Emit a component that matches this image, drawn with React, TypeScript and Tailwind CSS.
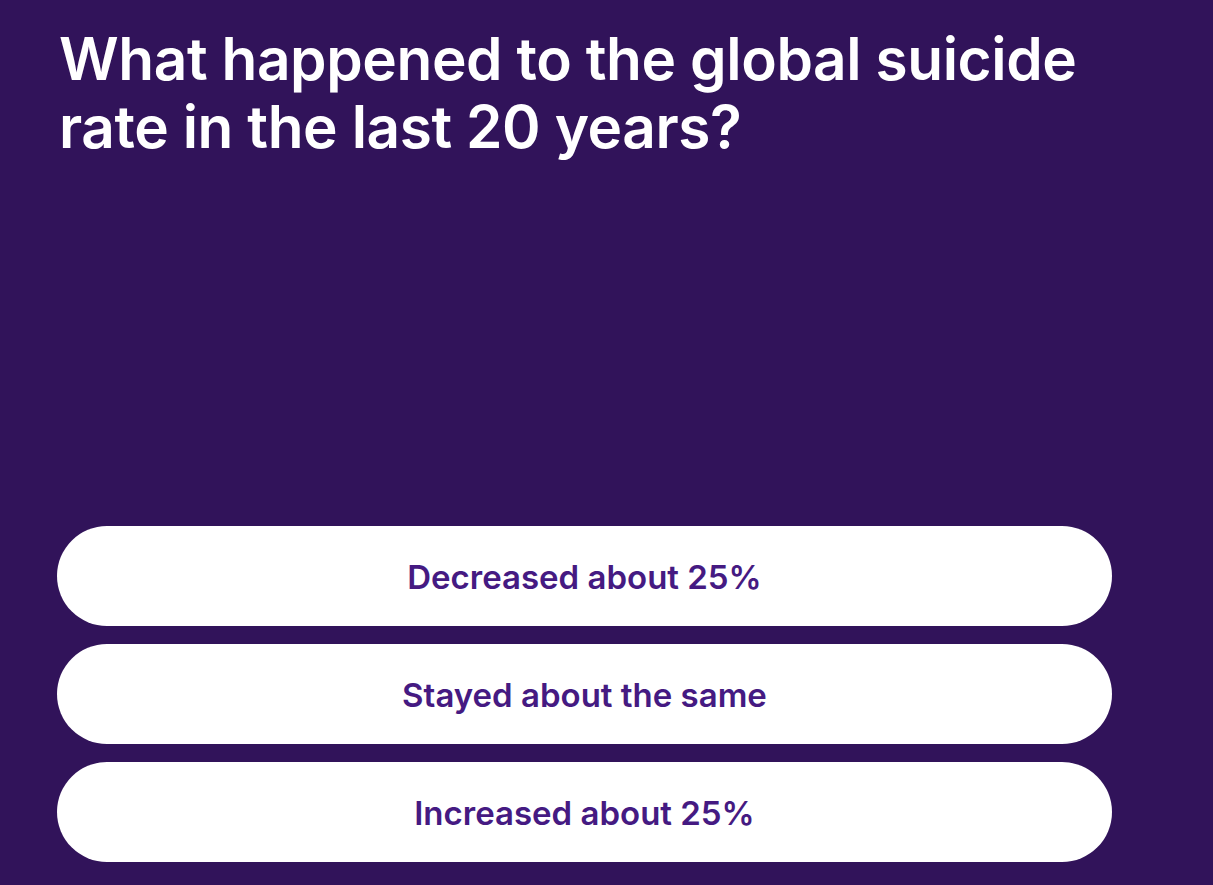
export default function App() {
  const answers = ["Decreased about 25%", "Stayed about the same", "Increased about 25%"];

  return (
    <div className="w-full h-[885px] bg-[#31135a] overflow-hidden flex flex-col px-[57px] pt-[25px] pb-[23px] font-['Inter',sans-serif]">
      <h1 className="w-[1080px] pl-[2px] text-white font-semibold text-[58.5px] leading-[68px] tracking-[-0.4px]">
        What happened to the global suicide rate in the last 20 years?
      </h1>

      <div className="mt-auto flex flex-col gap-[18px] w-[1055px]">
        {answers.map((a) => (
          <button
            key={a}
            className="h-[100px] w-full rounded-full bg-white text-[#451a82] text-[33px] font-semibold flex items-center justify-center pt-[3px]"
          >
            {a}
          </button>
        ))}
      </div>
    </div>
  );
}
